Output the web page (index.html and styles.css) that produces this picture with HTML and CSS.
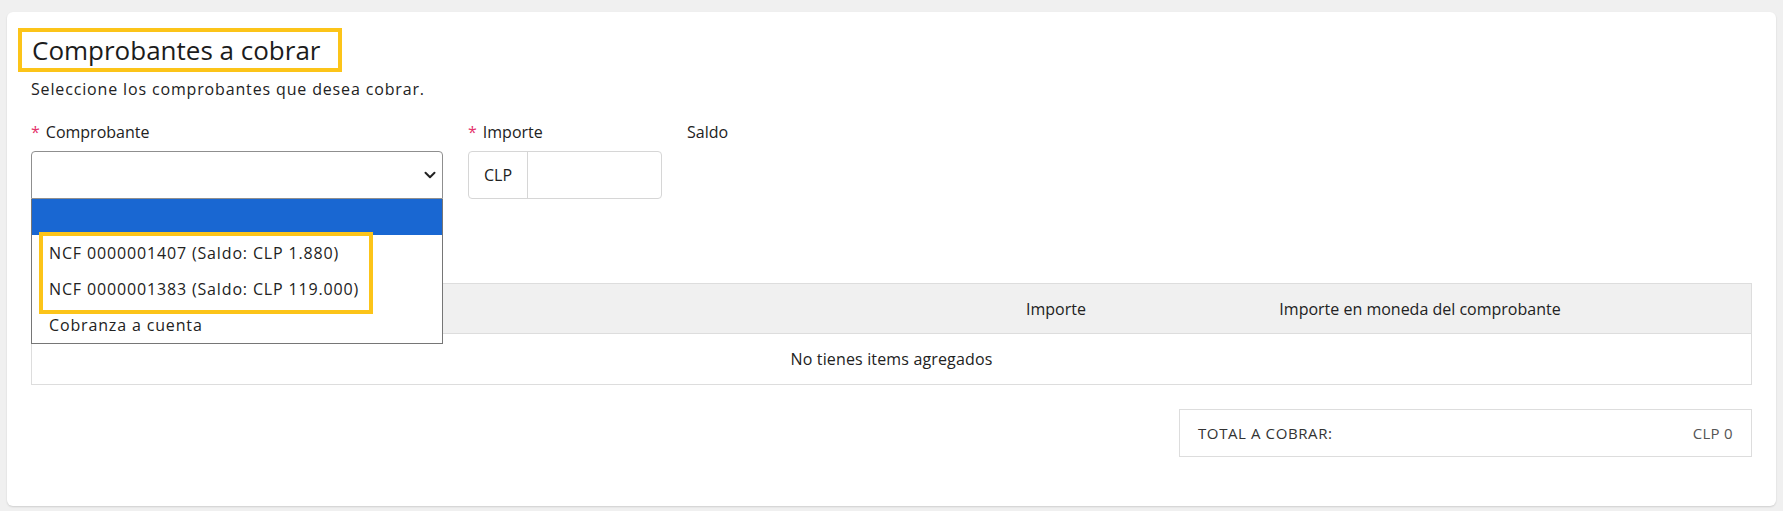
FILE: index.html
```html
<!DOCTYPE html>
<html lang="es">
<head>
<meta charset="utf-8">
<title>Comprobantes a cobrar</title>
<link rel="stylesheet" href="styles.css">
</head>
<body>
<main class="card">
  <h1 class="title">Comprobantes a cobrar</h1>
  <p class="subtitle">Seleccione los comprobantes que desea cobrar.</p>

  <div class="fields">
    <div class="field field-comprobante">
      <label class="label"><span class="req">*</span>Comprobante</label>
      <div class="select-wrap">
        <div class="select">
          <svg class="chevron" width="12" height="12" viewBox="0 0 12 12" aria-hidden="true">
            <polyline points="1.5,3.8 6,8.2 10.5,3.8" fill="none" stroke="#222" stroke-width="2" stroke-linecap="round" stroke-linejoin="round"/>
          </svg>
        </div>
        <ul class="dropdown">
          <li class="opt opt-active"></li>
          <li class="opt">NCF 0000001407 (Saldo: CLP 1.880)</li>
          <li class="opt">NCF 0000001383 (Saldo: CLP 119.000)</li>
          <li class="opt">Cobranza a cuenta</li>
          <li class="mark" aria-hidden="true"></li>
        </ul>
      </div>
    </div>

    <div class="field field-importe">
      <label class="label"><span class="req">*</span>Importe</label>
      <div class="input-group">
        <span class="addon">CLP</span>
        <span class="input"></span>
      </div>
    </div>

    <div class="field field-saldo">
      <label class="label">Saldo</label>
    </div>
  </div>

  <div class="table">
    <div class="thead">
      <div class="th th-left"></div>
      <div class="th">Importe</div>
      <div class="th">Importe en moneda del comprobante</div>
      <div class="th"></div>
    </div>
    <div class="tbody">No tienes items agregados</div>
  </div>

  <div class="total-row">
    <div class="total">
      <span class="total-label">TOTAL A COBRAR:</span>
      <span class="total-value">CLP 0</span>
    </div>
  </div>
</main>
</body>
</html>
```

FILE: styles.css
```css
* { box-sizing: border-box; }

body {
  margin: 0;
  background: #f0f0f0;
  font-family: "Open Sans", "Noto Sans", sans-serif;
  color: #222;
}

.card {
  margin: 12px 7px 6px;
  background: #fff;
  border-radius: 6px;
  box-shadow: 0 1px 2px rgba(0, 0, 0, 0.14);
  padding: 16px 24px 49px;
}

.title {
  display: inline-block;
  margin: 0 0 0 -13px;
  border: 4px solid #fcc419;
  padding: 0 18px 0 10px;
  font-size: 26px;
  line-height: 36px;
  font-weight: 400;
  color: #1c1c1c;
}

.subtitle {
  margin: 6px 0 0;
  font-size: 16px;
  line-height: 22px;
  letter-spacing: 0.85px;
}

.fields {
  display: flex;
  gap: 25px;
  margin-top: 21px;
}

.label {
  display: block;
  font-size: 16px;
  line-height: 22px;
  margin-bottom: 8px;
  color: #222;
}

.req {
  color: #e4336b;
  margin-right: 6px;
}

.field-comprobante { width: 412px; }
.field-importe { width: 194px; }

.select-wrap { position: relative; }

.select {
  height: 48px;
  border: 1px solid #8f8f8f;
  border-radius: 4px 4px 0 0;
  display: flex;
  align-items: center;
  justify-content: flex-end;
  padding-right: 6px;
}

.dropdown {
  position: absolute;
  top: 100%;
  left: 0;
  right: 0;
  margin: 0;
  padding: 0;
  list-style: none;
  background: #fff;
  border: 1px solid #767676;
  border-top: none;
  z-index: 2;
}

.opt {
  height: 36px;
  line-height: 36px;
  padding-left: 17px;
  font-size: 16px;
  letter-spacing: 0.85px;
  color: #222;
  white-space: nowrap;
}

.opt-active { background: #1967d2; }

.mark {
  position: absolute;
  left: 7px;
  top: 33px;
  width: 334px;
  height: 82px;
  border: 4px solid #fcc419;
}

.input-group {
  display: flex;
  height: 48px;
  border: 1px solid #d6d6d6;
  border-radius: 4px;
}

.addon {
  width: 59px;
  border-right: 1px solid #d6d6d6;
  display: flex;
  align-items: center;
  padding-left: 15px;
  font-size: 16px;
  color: #222;
}

.input { flex: 1; }

.table {
  margin-top: 84px;
  border: 1px solid #dddddd;
}

.thead {
  display: grid;
  grid-template-columns: 838px 372px 356px 1fr;
  height: 50px;
  background: #f0f0f0;
  border-bottom: 1px solid #dddddd;
}

.th {
  display: flex;
  align-items: center;
  justify-content: center;
  font-size: 16px;
  color: #222;
}

.th-left {
  justify-content: flex-start;
  padding-left: 16px;
}

.tbody {
  height: 50px;
  display: flex;
  align-items: center;
  justify-content: center;
  font-size: 16px;
  letter-spacing: 0.15px;
  color: #222;
}

.total-row {
  display: flex;
  justify-content: flex-end;
  margin-top: 24px;
}

.total {
  width: 573px;
  height: 48px;
  border: 1px solid #dddddd;
  display: flex;
  align-items: center;
  justify-content: space-between;
  padding: 0 18px;
  font-size: 15px;
  letter-spacing: 0.6px;
}

.total-label { color: #333; }
.total-value { color: #555; letter-spacing: 0.3px; }
```
